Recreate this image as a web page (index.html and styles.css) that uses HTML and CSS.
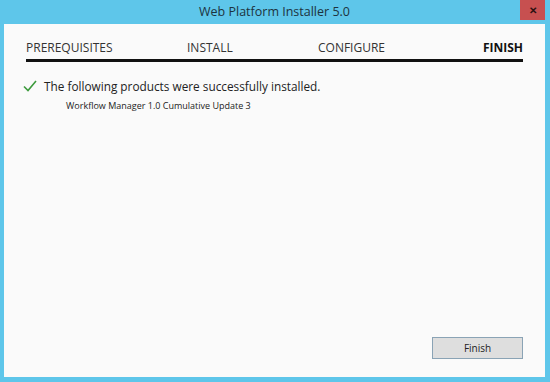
FILE: index.html
```html
<!DOCTYPE html>
<html lang="en">
<head>
    <meta charset="UTF-8">
    <title>Web Platform Installer 5.0</title>
    <link rel="stylesheet" href="styles.css">
</head>
<body>
    <div class="window">
        <div class="titlebar">
            <span class="title">Web Platform Installer 5.0</span>
            <button class="close">&#x2715;</button>
        </div>
        <div class="content">
            <div class="steps">
                <span class="step">PREREQUISITES</span>
                <span class="step">INSTALL</span>
                <span class="step">CONFIGURE</span>
                <span class="step current">FINISH</span>
            </div>
            <div class="result">
                <div class="message">
                    <svg class="check" width="14" height="12" viewBox="0 0 14 12">
                        <path d="M1 6.5 L5 10.5 L13 1" fill="none" stroke="#3c9a3c" stroke-width="1.6"/>
                    </svg>
                    <span>The following products were successfully installed.</span>
                </div>
                <div class="product">Workflow Manager 1.0 Cumulative Update 3</div>
            </div>
            <div class="footer">
                <button class="btn">Finish</button>
            </div>
        </div>
    </div>
</body>
</html>
```

FILE: styles.css
```css
body {
    margin: 0;
    font-family: "Open Sans", "Noto Sans", sans-serif;
}
.window {
    width: 550px;
    height: 382px;
    box-sizing: border-box;
    background-color: #5ec6ea;
    padding: 0 5px 5px 4px;
    display: flex;
    flex-direction: column;
}
.titlebar {
    height: 24px;
    position: relative;
    display: flex;
    align-items: center;
    justify-content: center;
}
.title {
    font-size: 12.5px;
    color: #1d3340;
    margin-top: -1px;
}
.close {
    position: absolute;
    top: 0;
    right: 0;
    width: 25px;
    height: 20px;
    border: none;
    padding: 0;
    background-color: #c75050;
    color: #2a1010;
    font-size: 10px;
    font-weight: bold;
}
.content {
    flex: 1;
    background-color: #fafafa;
    display: flex;
    flex-direction: column;
    padding: 0 22px 18px 22px;
}
.steps {
    display: grid;
    grid-template-columns: 161px 131px 1fr auto;
    padding-top: 15px;
    padding-bottom: 3px;
    border-bottom: 3px solid #111;
    font-size: 12px;
    color: #333;
}
.step.current {
    font-weight: bold;
    color: #111;
}
.result {
    flex: 1;
    padding-top: 16px;
}
.message {
    display: flex;
    align-items: center;
    gap: 7px;
    font-size: 11.8px;
    color: #222;
}
.check {
    margin-left: -3px;
}
.product {
    font-size: 9px;
    color: #222;
    margin-top: 5px;
    padding-left: 40px;
}
.footer {
    display: flex;
    justify-content: flex-end;
}
.btn {
    width: 91px;
    height: 22px;
    background-color: #dedede;
    border: 1px solid #8aa3b5;
    font-family: inherit;
    font-size: 10px;
    color: #222;
}
```
